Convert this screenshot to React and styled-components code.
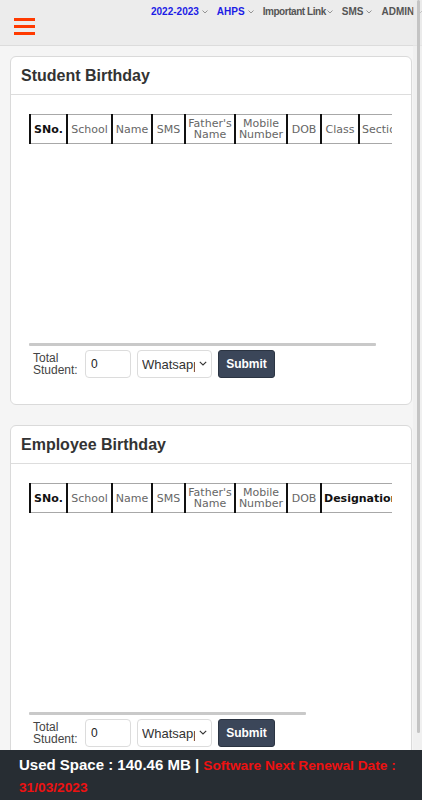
import React from "react";
import styled, { createGlobalStyle } from "styled-components";

const Global = createGlobalStyle`
  html, body { margin: 0; padding: 0; overflow: hidden; }
  body { background: #f5f5f5; font-family: "Liberation Sans", Arial, sans-serif; color: #333; }
  * { box-sizing: border-box; }
`;

const Page = styled.div`
  min-height: 100vh;
`;

const Header = styled.header`
  height: 46px;
  background: #ececec;
  border-bottom: 1px solid #dcdcdc;
  display: flex;
  align-items: flex-start;
  overflow: hidden;
`;

const Burger = styled.button`
  flex: none;
  margin: 18px 0 0 14px;
  padding: 0;
  width: 21px;
  height: 17px;
  border: 0;
  background: transparent;
  display: flex;
  flex-direction: column;
  justify-content: space-between;
  span {
    display: block;
    width: 21px;
    height: 3px;
    background: #ff3a00;
  }
`;

const Nav = styled.nav`
  flex: none;
  margin-left: 116px;
  display: flex;
  gap: 9px;
  white-space: nowrap;
  padding-top: 6px;
`;

const NavItem = styled.span`
  display: flex;
  align-items: center;
  gap: ${(p) => (p.$tight ? "1px" : "3px")};
  font-size: 10px;
  font-weight: bold;
  letter-spacing: ${(p) => (p.$tight ? "-0.45px" : "0")};
  color: ${(p) => (p.$blue ? "#1c1ce6" : "#555")};
  svg { flex: none; }
`;

const Main = styled.main`
  padding: 10px 10px 60px 10px;
  display: flex;
  flex-direction: column;
  gap: 20px;
`;

const Card = styled.section`
  background: #fff;
  border: 1px solid #dadada;
  border-radius: 6px;
`;

const CardHead = styled.h2`
  margin: 0;
  height: 38px;
  padding: 0 10px;
  display: flex;
  align-items: center;
  font-size: 16px;
  font-weight: bold;
  color: #333;
  border-bottom: 1px solid #dddddd;
`;

const CardBody = styled.div`
  padding: 19px 19px 26px 18px;
`;

const TableWrap = styled.div`
  height: 229px;
  overflow: hidden;
`;

const Table = styled.table`
  border-collapse: collapse;
  table-layout: fixed;
  width: ${(p) => p.$w}px;
  font-family: "DejaVu Sans", Verdana, sans-serif;
  font-size: 11px;
`;

const Th = styled.th`
  width: ${(p) => p.$w}px;
  height: 29px;
  padding: 0 2px;
  line-height: 11px;
  white-space: nowrap;
  overflow: hidden;
  font-weight: ${(p) => (p.$bold ? "bold" : "normal")};
  color: ${(p) => (p.$bold ? "#111" : "#666")};
  border-top: 1px solid #a8a8a8;
  border-bottom: 1px solid #a8a8a8;
  border-left: 2px solid #111;
  border-right: 2px solid #111;
  text-align: ${(p) => (p.$left ? "left" : "center")};
`;

const ScrollThumb = styled.div`
  height: 3px;
  background: #c9c9c9;
  border-radius: 1px;
  margin-bottom: 4px;
`;

const Form = styled.div`
  display: flex;
  align-items: center;
  gap: 6px;
  padding-left: 4px;
`;

const Label = styled.label`
  font-size: 12px;
  line-height: 12px;
  color: #444;
  width: 46px;
`;

const Input = styled.input`
  width: 46px;
  height: 28px;
  border: 1px solid #dcdcdc;
  border-radius: 4px;
  padding: 0 5px;
  font-family: "Liberation Sans", Arial, sans-serif;
  font-size: 12px;
  color: #222;
  background: #fff;
  outline: none;
`;

const SelectBox = styled.div`
  position: relative;
  width: 75px;
  height: 28px;
  svg {
    position: absolute;
    right: 5px;
    top: 11px;
    pointer-events: none;
  }
`;

const Select = styled.select`
  appearance: none;
  width: 100%;
  height: 100%;
  border: 1px solid #dcdcdc;
  border-radius: 4px;
  padding: 0 16px 0 4px;
  font-family: "Liberation Sans", Arial, sans-serif;
  font-size: 13px;
  color: #333;
  background: #fff;
`;

const Button = styled.button`
  width: 57px;
  height: 28px;
  background: #3b4659;
  border: 1px solid #2b3442;
  border-radius: 3px;
  color: #fff;
  font-family: "Liberation Sans", Arial, sans-serif;
  font-size: 12px;
  font-weight: bold;
  padding: 0;
`;

const Footer = styled.footer`
  position: fixed;
  left: 0;
  right: 0;
  bottom: 0;
  height: 50px;
  background: #272d33;
  padding: 4px 12px 0 19px;
  line-height: 21px;
  z-index: 2;
`;

const Used = styled.span`
  color: #fff;
  font-weight: bold;
  font-size: 15px;
`;

const Renewal = styled.span`
  color: #ee1111;
  font-weight: bold;
  font-size: 13.7px;
`;

const VTrack = styled.div`
  position: fixed;
  top: 0;
  right: 0;
  width: 9px;
  height: 100vh;
  background: rgba(235, 235, 235, 0.55);
  z-index: 1;
`;

const VThumb = styled.div`
  margin-left: 4px;
  width: 3px;
  height: 733px;
  background: #c4c4c4;
  border-radius: 2px;
`;

const Chevron = () => (
  <svg width="6" height="4" viewBox="0 0 6 4">
    <path d="M0.5 0.5 L3 3 L5.5 0.5" fill="none" stroke="#8a8a8a" strokeWidth="0.9" />
  </svg>
);

const studentCols = [
  { t: "SNo.", w: 37, b: true },
  { t: "School", w: 45 },
  { t: "Name", w: 40 },
  { t: "SMS", w: 33 },
  { t: ["Father's", "Name"], w: 50 },
  { t: ["Mobile", "Number"], w: 52 },
  { t: "DOB", w: 34 },
  { t: "Class", w: 38 },
  { t: "Section", w: 56, left: true },
];

const employeeCols = [
  { t: "SNo.", w: 37, b: true },
  { t: "School", w: 45 },
  { t: "Name", w: 40 },
  { t: "SMS", w: 33 },
  { t: ["Father's", "Name"], w: 50 },
  { t: ["Mobile", "Number"], w: 52 },
  { t: "DOB", w: 34 },
  { t: "Designation", w: 90, b: true, left: true },
];

function BirthdayCard({ title, cols, thumb }) {
  const total = cols.reduce((s, c) => s + c.w, 0);
  return (
    <Card>
      <CardHead>{title}</CardHead>
      <CardBody>
        <TableWrap>
          <Table $w={total}>
            <thead>
              <tr>
                {cols.map((c, i) => (
                  <Th key={i} $w={c.w} $bold={c.b} $left={c.left}>
                    {Array.isArray(c.t) ? (
                      <>
                        {c.t[0]}
                        <br />
                        {c.t[1]}
                      </>
                    ) : (
                      c.t
                    )}
                  </Th>
                ))}
              </tr>
            </thead>
          </Table>
        </TableWrap>
        <ScrollThumb style={{ width: thumb }} />
        <Form>
          <Label>Total Student:</Label>
          <Input defaultValue="0" />
          <SelectBox>
            <Select defaultValue="w">
              <option value="w">Whatsapp</option>
              <option value="s">SMS</option>
            </Select>
            <svg width="8" height="5" viewBox="0 0 8 5">
              <path d="M0.8 0.8 L4 4 L7.2 0.8" fill="none" stroke="#333" strokeWidth="1.1" />
            </svg>
          </SelectBox>
          <Button>Submit</Button>
        </Form>
      </CardBody>
    </Card>
  );
}

export default function App() {
  return (
    <Page>
      <Global />
      <Header>
        <Burger aria-label="menu">
          <span />
          <span />
          <span />
        </Burger>
        <Nav>
          <NavItem $blue>2022-2023 <Chevron /></NavItem>
          <NavItem $blue>AHPS <Chevron /></NavItem>
          <NavItem $tight>Important Link<Chevron /></NavItem>
          <NavItem>SMS <Chevron /></NavItem>
          <NavItem>ADMIN <Chevron /></NavItem>
        </Nav>
      </Header>
      <Main>
        <BirthdayCard title="Student Birthday" cols={studentCols} thumb={347} />
        <BirthdayCard title="Employee Birthday" cols={employeeCols} thumb={277} />
      </Main>
      <VTrack>
        <VThumb />
      </VTrack>
      <Footer>
        <Used>Used Space : 140.46 MB | </Used>
        <Renewal>Software Next Renewal Date : 31/03/2023</Renewal>
      </Footer>
    </Page>
  );
}
